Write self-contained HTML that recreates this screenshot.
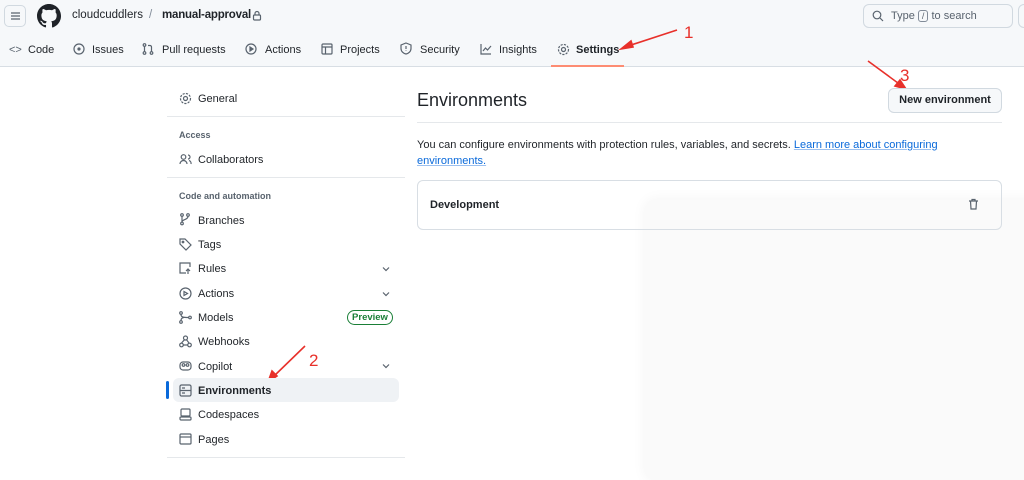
<!DOCTYPE html>
<html><head><meta charset="utf-8"><style>
*{box-sizing:border-box;margin:0;padding:0}
body{width:1024px;height:463px;overflow:hidden;background:#fff;font-family:"Liberation Sans",Arial,sans-serif;color:#1f2328;position:relative;font-size:11px}
.a{position:absolute;white-space:nowrap}
.hdr{position:absolute;left:0;top:0;width:1024px;height:67px;background:#f6f8fa;border-bottom:1px solid #d8dee4}
svg{display:block}
.ic{position:absolute;stroke:#59636e;fill:none;stroke-width:1.2}
.nav{top:44px;font-size:11px;color:#1f2328}
.si{left:198px;font-size:11px;color:#1f2328;margin-top:1px}
.lbl{left:179px;font-size:9px;font-weight:bold;color:#59636e}
.sep{position:absolute;left:167px;width:238px;height:1px;background:#e5e8eb}
.chev{position:absolute;left:382px;width:8px;height:8px}
</style></head><body>
<div class="hdr"></div>
<div class="a" style="left:4px;top:5px;width:22px;height:22px;border:1px solid #d1d9e0;border-radius:5px;background:#f6f8fa"></div>
<svg class="ic" style="left:10px;top:11px" width="11" height="10"><path d="M1 2H10M1 5H10M1 8H10" stroke="#59636e"/></svg>
<svg class="a" style="left:37px;top:4px" width="24" height="24" viewBox="0 0 16 16"><path fill="#1f2328" d="M8 0C3.58 0 0 3.58 0 8c0 3.54 2.290 6.530 5.470 7.590.4.07.55-.17.55-.38v-1.33c-2.230.48-2.700-1.070-2.700-1.070-.36-.92-.89-1.170-.89-1.170-.73-.5.06-.49.06-.49.8.06 1.230.83 1.230.83.72 1.230 1.880.87 2.330.66.07-.52.28-.87.51-1.070-1.780-.2-3.640-.89-3.640-3.950 0-.87.31-1.590.82-2.150-.08-.2-.36-1.020.08-2.120 0 0 .67-.21 2.200.82a7.6 7.6 0 0 1 4 0c1.530-1.040 2.200-.82 2.200-.82.44 1.100.16 1.920.08 2.120.51.56.82 1.270.82 2.150 0 3.070-1.870 3.750-3.650 3.950.29.25.54.73.54 1.480v2.200c0 .21.15.46.55.38A8.010 8.010 0 0 0 16 8c0-4.420-3.580-8-8-8z"/></svg>
<div class="a" style="left:72px;top:9px;font-size:11.5px;color:#1f2328">cloudcuddlers</div>
<div class="a" style="left:149px;top:9px;font-size:11.5px;color:#818b98">/</div>
<div class="a" style="left:162px;top:9px;font-size:11.5px;font-weight:bold;letter-spacing:-0.2px">manual-approval</div>
<svg class="ic" style="left:252px;top:10px" width="10" height="11"><rect x="1.500" y="5" width="7" height="5" rx="1"/><path d="M3 5V3.500a2 2 0 0 1 4 0V5"/></svg>
<div class="a" style="left:863px;top:4px;width:150px;height:24px;border:1px solid #d1d9e0;border-radius:6px;background:#f6f8fa"></div>
<svg class="ic" style="left:872px;top:10px" width="12" height="12"><circle cx="5" cy="5" r="3.800"/><path d="M8 8L11 11"/></svg>
<div class="a" style="left:891px;top:10px;font-size:11px;line-height:12px;color:#59636e">Type <span style="display:inline-block;border:1px solid #818b98;border-radius:3px;padding:0 3px;font-size:9px;line-height:10px;vertical-align:middle">/</span> to search</div>
<div class="a" style="left:1018px;top:4px;width:20px;height:24px;border:1px solid #d1d9e0;border-radius:6px"></div>
<div class="a nav" style="left:9px;color:#59636e">&lt;&gt;</div><div class="a nav" style="left:28px">Code</div>
<svg class="ic" style="left:73px;top:43px" width="12" height="12"><circle cx="6" cy="6" r="5"/><circle cx="6" cy="6" r="1" fill="#59636e"/></svg><div class="a nav" style="left:92px">Issues</div>
<svg class="ic" style="left:142px;top:43px" width="12" height="12"><circle cx="2.500" cy="2" r="1.300"/><circle cx="2.500" cy="10" r="1.300"/><circle cx="9.500" cy="10" r="1.300"/><path d="M2.500 3.500V8.500M9.500 8.500V4a1.500 1.500 0 0 0-1.500-1.500H6"/></svg><div class="a nav" style="left:162px">Pull requests</div>
<svg class="ic" style="left:245px;top:43px" width="12" height="12"><circle cx="6" cy="6" r="5"/><path d="M5 4L8 6L5 8Z" fill="#59636e"/></svg><div class="a nav" style="left:265px">Actions</div>
<svg class="ic" style="left:321px;top:43px" width="12" height="12"><rect x="1" y="1" width="10" height="10" rx="1"/><path d="M1 4H11M4.500 4V11"/></svg><div class="a nav" style="left:340px">Projects</div>
<svg class="ic" style="left:400px;top:42px" width="12" height="13"><path d="M6 1L11 3V6.500C11 9.500 8.500 11.500 6 12C3.500 11.500 1 9.500 1 6.500V3Z"/><path d="M6 4V7M6 8.500V9"/></svg><div class="a nav" style="left:420px">Security</div>
<svg class="ic" style="left:480px;top:43px" width="12" height="12"><path d="M1 1V11H11M3 8L5.500 5L7.500 7L11 3"/></svg><div class="a nav" style="left:499px">Insights</div>
<svg class="ic" style="left:557px;top:43px" width="13" height="13"><circle cx="6.500" cy="6.500" r="2"/><circle cx="6.500" cy="6.500" r="5" stroke-dasharray="2.200 1.200"/></svg><div class="a nav" style="left:576px;font-weight:bold">Settings</div>
<div class="a" style="left:551px;top:65px;width:73px;height:2px;background:#fd8c73"></div>
<svg class="a" style="left:0;top:0" width="1024" height="463">
<g stroke="#e8302a" stroke-width="1.600" fill="#e8302a">
<path d="M677 30L625 47" fill="none"/><path d="M621 49L631 41L633 47Z"/>
<path d="M868 61L902 86" fill="none"/><path d="M906 89L895 86L900 80Z"/>
<path d="M305 346L272 378" fill="none"/><path d="M268 382L272 371L277 376Z"/>
</g>
<g fill="#e8302a" font-family="Liberation Sans" font-size="17"><text x="684" y="38">1</text><text x="309" y="366">2</text><text x="900" y="81">3</text></g>
</svg>
<svg class="ic" style="left:179px;top:92px" width="13" height="13"><circle cx="6.500" cy="6.500" r="2"/><circle cx="6.500" cy="6.500" r="5" stroke-dasharray="2.200 1.200"/></svg>
<div class="a si" style="top:92px">General</div>
<div class="sep" style="top:116px"></div>
<div class="a lbl" style="top:130px">Access</div>
<svg class="ic" style="left:179px;top:153px" width="13" height="12"><circle cx="4.500" cy="4" r="2.300"/><path d="M1 11a3.500 3.500 0 0 1 7 0M9 2a2 2 0 0 1 0 4M10 7.500a3 3 0 0 1 2 3.500"/></svg>
<div class="a si" style="top:153px">Collaborators</div>
<div class="sep" style="top:177px"></div>
<div class="a lbl" style="top:191px">Code and automation</div>
<svg class="ic" style="left:179px;top:213px" width="12" height="13"><circle cx="3" cy="10.500" r="1.300"/><circle cx="3" cy="2" r="1.300"/><circle cx="9" cy="2" r="1.300"/><path d="M3 3.500V9M9 3.500C9 7 3 6 3 9"/></svg>
<div class="a si" style="top:214px">Branches</div>
<svg class="ic" style="left:179px;top:238px" width="13" height="13"><path d="M1 1H6L12 7L7 12L1 6Z"/><circle cx="4" cy="4" r="0.800"/></svg>
<div class="a si" style="top:238px">Tags</div>
<svg class="ic" style="left:179px;top:262px" width="13" height="13"><path d="M7 11H1V1H11V5M9 12V7M7 9L9 7L11 9"/></svg>
<div class="a si" style="top:262px">Rules</div>
<svg class="ic chev" style="top:265px"><path d="M1 2.500L4 5.500L7 2.500"/></svg>
<svg class="ic" style="left:179px;top:287px" width="13" height="13"><circle cx="6.500" cy="6.500" r="5.500"/><path d="M5 4.500L8.500 6.500L5 8.500Z"/></svg>
<div class="a si" style="top:287px">Actions</div>
<svg class="ic chev" style="top:290px"><path d="M1 2.500L4 5.500L7 2.500"/></svg>
<svg class="ic" style="left:179px;top:311px" width="13" height="13"><circle cx="2" cy="2" r="1.300"/><circle cx="2" cy="11" r="1.300"/><circle cx="11" cy="6.500" r="1.300"/><path d="M2 3.500C2 6.500 5 6.500 9.500 6.500M2 9.500C2 6.500 5 6.500 5 6.500"/></svg>
<div class="a si" style="top:311px">Models</div>
<div class="a" style="left:347px;top:310px;width:46px;height:15px;border:1px solid #1a7f37;border-radius:8px;color:#1a7f37;font-size:9.500px;font-weight:bold;text-align:center;line-height:13px">Preview</div>
<svg class="ic" style="left:179px;top:335px" width="13" height="13"><circle cx="6.500" cy="3" r="2"/><circle cx="2.500" cy="10" r="1.800"/><circle cx="10.500" cy="10" r="1.800"/><path d="M5.500 4.700L2.500 8M4.300 10H8.700M7.500 4.700L10 8"/></svg>
<div class="a si" style="top:335px">Webhooks</div>
<svg class="ic" style="left:179px;top:359px" width="13" height="13"><rect x="1" y="3" width="11" height="8" rx="3"/><circle cx="4.500" cy="6" r="1.300"/><circle cx="8.500" cy="6" r="1.300"/></svg>
<div class="a si" style="top:360px">Copilot</div>
<svg class="ic chev" style="top:362px"><path d="M1 2.500L4 5.500L7 2.500"/></svg>
<div class="a" style="left:173px;top:378px;width:226px;height:24px;background:#eff2f5;border-radius:6px"></div>
<div class="a" style="left:166px;top:381px;width:3px;height:18px;background:#0969da;border-radius:2px"></div>
<svg class="ic" style="left:179px;top:384px" width="13" height="13"><rect x="1" y="1" width="11" height="11" rx="1.500"/><path d="M1 6.500H12M3 4H6M3 9H6"/></svg>
<div class="a si" style="top:384px;font-weight:bold">Environments</div>
<svg class="ic" style="left:179px;top:408px" width="13" height="13"><rect x="2" y="1" width="9" height="7" rx="1"/><rect x="1" y="9" width="11" height="3" rx="1"/></svg>
<div class="a si" style="top:408px">Codespaces</div>
<svg class="ic" style="left:179px;top:433px" width="13" height="12"><rect x="1" y="1" width="11" height="10" rx="1"/><path d="M1 4H12"/></svg>
<div class="a si" style="top:433px">Pages</div>
<div class="sep" style="top:457px"></div>
<div class="a" style="left:417px;top:90px;font-size:18px;color:#1f2328">Environments</div>
<div class="a" style="left:888px;top:88px;width:114px;height:25px;border:1px solid #d1d9e0;border-radius:6px;background:#f6f8fa;font-size:11px;font-weight:bold;text-align:center;line-height:23px">New environment</div>
<div class="a" style="left:417px;top:122px;width:585px;height:1px;background:#e5e8eb"></div>
<div class="a" style="left:417px;top:137px;font-size:11px;line-height:16px;white-space:normal;width:560px">You can configure environments with protection rules, variables, and secrets. <span style="color:#0969da;text-decoration:underline;text-decoration-color:#9cc0ef">Learn more about configuring environments.</span></div>
<div class="a" style="left:645px;top:200px;width:400px;height:280px;background:#fafafa;box-shadow:0 0 14px rgba(0,0,0,0.05);border-radius:10px"></div>
<div class="a" style="left:417px;top:180px;width:585px;height:50px;border:1px solid #d8dee4;border-radius:6px"></div>
<div class="a" style="left:430px;top:199px;font-size:11px;font-weight:bold">Development</div>
<svg class="ic" style="left:968px;top:198px" width="11" height="12"><path d="M1 3H10M4 3V1.500H7V3M2.500 3L3 11H8L8.500 3"/></svg>
</body></html>
